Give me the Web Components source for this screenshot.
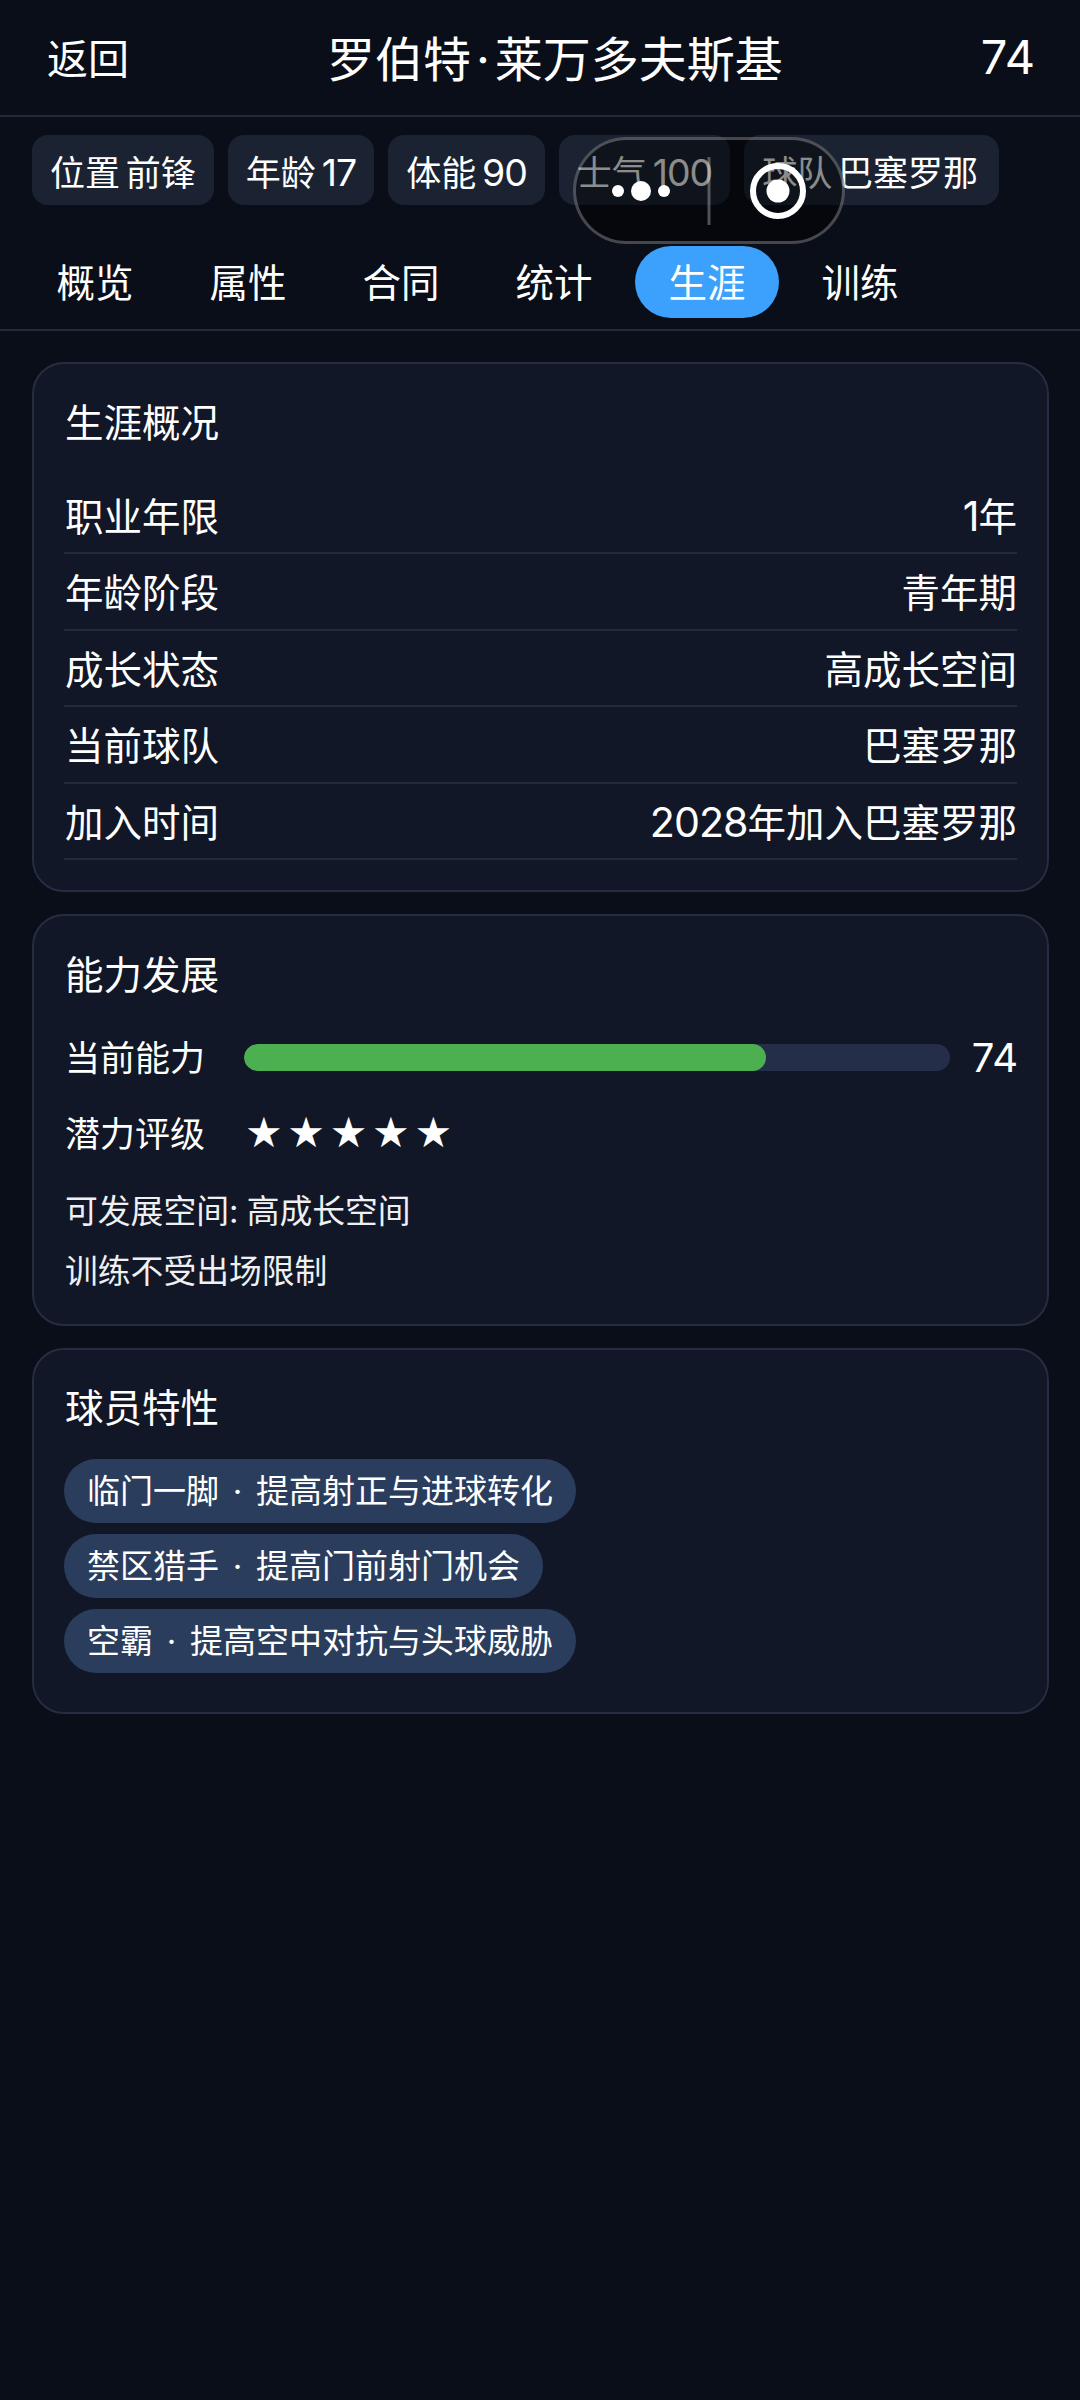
<!DOCTYPE html>
<html lang="zh">
<head>
<meta charset="utf-8">
<title>生涯</title>
<style>
  html, body { margin: 0; height: 2400px; background: #0a0e19; }
  body { position: relative; color: #fff; font-family: Inter, "Noto Sans CJK SC", sans-serif; overflow: hidden; }
  main-view { display: block; }
  .n { font-size: 1.07em; letter-spacing: -1px; }
</style>
</head>
<body>
<main-view>
  <top-bar score="74" back="返回">罗伯特<b>·</b>莱万多夫斯基</top-bar>
  <chip-row>
    <stat-chip>位置 前锋</stat-chip>
    <stat-chip>年龄 <span class="n">17</span></stat-chip>
    <stat-chip>体能 <span class="n">90</span></stat-chip>
    <stat-chip>士气 <span class="n">100</span></stat-chip>
    <stat-chip>球队 巴塞罗那</stat-chip>
  </chip-row>
  <tab-bar>
    <tab-item>概览</tab-item>
    <tab-item>属性</tab-item>
    <tab-item>合同</tab-item>
    <tab-item>统计</tab-item>
    <tab-item active>生涯</tab-item>
    <tab-item>训练</tab-item>
  </tab-bar>
  <card-list>
    <info-card heading="生涯概况" tail="30">
      <info-row label="职业年限"><span class="n">1</span>年</info-row>
      <info-row label="年龄阶段">青年期</info-row>
      <info-row label="成长状态">高成长空间</info-row>
      <info-row label="当前球队">巴塞罗那</info-row>
      <info-row label="加入时间"><span class="n">2028</span>年加入巴塞罗那</info-row>
    </info-card>
    <info-card heading="能力发展" tail="23">
      <ability-bar label="当前能力" value="74"></ability-bar>
      <star-rating label="潜力评级">★★★★★</star-rating>
      <note-line>可发展空间: 高成长空间</note-line>
      <note-line>训练不受出场限制</note-line>
    </info-card>
    <info-card heading="球员特性" tail="39">
      <trait-list>
        <trait-pill>临门一脚 <b>·</b> 提高射正与进球转化</trait-pill>
        <trait-pill>禁区猎手 <b>·</b> 提高门前射门机会</trait-pill>
        <trait-pill>空霸 <b>·</b> 提高空中对抗与头球威胁</trait-pill>
      </trait-list>
    </info-card>
  </card-list>
</main-view>
<capsule-menu></capsule-menu>

<script>
(function () {
  // small helper, every element is the same shape: a shadow root from a string
  function define(name, html, setup) {
    customElements.define(
      name,
      class extends HTMLElement {
        constructor() {
          super();
          const template = document.createElement("template");
          template.innerHTML = html;
          this.attachShadow({ mode: "open" }).appendChild(template.content.cloneNode(true));
        }
        connectedCallback() {
          if (setup) setup(this, this.shadowRoot);
        }
      }
    );
  }

  define("top-bar", `
    <style>
      :host { display: flex; justify-content: space-between; align-items: center; height: 112px; padding: 0 45px 3px 47px; border-bottom: 2px solid #232a3d; }
      .back { font-size: 41px; }
      .name { font-size: 48px; }
      .score { font-size: 47px; }
      ::slotted(b) { font-weight: 400; margin: 0 5px; }
    </style>
    <span class="back"></span><span class="name"><slot></slot></span><span class="score"></span>
  `, (el, root) => {
    root.querySelector(".back").textContent = el.getAttribute("back");
    root.querySelector(".score").textContent = el.getAttribute("score");
  });

  define("chip-row", `
    <style>:host { display: flex; gap: 14px; padding: 18px 32px 0; }</style>
    <slot></slot>
  `);

  define("stat-chip", `
    <style>
      :host { display: flex; align-items: center; height: 70px; padding: 0 18px; border-radius: 16px; background: #1b2333; font-size: 35px; white-space: nowrap; word-spacing: -4px; }
      :host(:last-child) { padding-right: 21px; }
    </style>
    <span><slot></slot></span>
  `);

  define("tab-bar", `
    <style>:host { display: flex; gap: 9px; align-items: flex-end; height: 127px; padding: 0 23px 11px; margin-top: -1px; box-sizing: border-box; border-bottom: 2px solid #232a3d; }</style>
    <slot></slot>
  `);

  define("tab-item", `
    <style>
      :host { display: flex; align-items: center; height: 72px; padding: 0 33.5px 4px; box-sizing: border-box; border-radius: 36px; font-size: 38.5px; }
      :host([active]) { background: #3ba1fd; }
    </style>
    <slot></slot>
  `);

  define("card-list", `
    <style>:host { display: flex; flex-direction: column; gap: 22px; padding: 31px 31px 0 32px; }</style>
    <slot></slot>
  `);

  define("info-card", `
    <style>
      :host { display: block; padding: 30.5px 30px 32px 31px; border: 2px solid #262d40; border-radius: 32px; background: #111726; }
      h2 { margin: 0 0 27px; font-size: 38.5px; font-weight: 400; line-height: 56px; }
    </style>
    <h2></h2><slot></slot>
  `, (el, root) => {
    root.querySelector("h2").textContent = el.getAttribute("heading");
    if (el.hasAttribute("tail")) el.style.paddingBottom = el.getAttribute("tail") + "px";
  });

  define("info-row", `
    <style>
      :host { display: flex; justify-content: space-between; align-items: center; height: 72.5px; margin-left: -1px; padding: 0 0 2px 1px; border-bottom: 2px solid #232a3d; font-size: 38.5px; }
    </style>
    <span></span><span><slot></slot></span>
  `, (el, root) => {
    root.querySelector("span").textContent = el.getAttribute("label");
  });

  define("ability-bar", `
    <style>
      :host { display: flex; align-items: center; gap: 22px; height: 60px; margin-top: -2px; font-size: 35px; }
      .label { padding-bottom: 4px; }
      .track { flex: 1; height: 27px; border-radius: 14px; background: #252e48; overflow: hidden; margin-left: 17px; }
      .fill { height: 100%; border-radius: 14px; background: #4caf50; }
      .value { font-size: 40px; margin-right: -1px; }
    </style>
    <span class="label"></span><div class="track"><div class="fill"></div></div><span class="value"></span>
  `, (el, root) => {
    const value = el.getAttribute("value");
    root.querySelector(".label").textContent = el.getAttribute("label");
    root.querySelector(".value").textContent = value;
    root.querySelector(".fill").style.width = value + "%";
  });

  define("star-rating", `
    <style>
      :host { display: flex; align-items: center; height: 90px; font-size: 35px; }
      .label { padding-bottom: 2px; }
      .stars { margin-left: 40px; font-family: "DejaVu Sans", sans-serif; font-size: 42px; letter-spacing: 4.7px; }
    </style>
    <span class="label"></span><span class="stars"><slot></slot></span>
  `, (el, root) => {
    root.querySelector(".label").textContent = el.getAttribute("label");
  });

  define("note-line", `
    <style>:host { display: block; height: 60px; line-height: 60px; font-size: 32.8px; word-spacing: -1px; color: #eef0f4; }
    :host(:first-of-type) { margin-top: 3px; }</style>
    <slot></slot>
  `);

  define("trait-list", `
    <style>:host { display: flex; flex-direction: column; align-items: flex-start; gap: 11px; margin: -4px 0 0 -1px; }</style>
    <slot></slot>
  `);

  define("trait-pill", `
    <style>
      :host { display: block; height: 64px; line-height: 64px; padding: 0 23px; border-radius: 32px; background: #2a3d5c; font-size: 33px; white-space: nowrap; }
      ::slotted(b) { font-weight: 400; margin: 0 4.5px; }
    </style>
    <slot></slot>
  `);

  // the mini program capsule that floats over the page
  define("capsule-menu", `
    <style>
      :host { position: absolute; left: 573px; top: 137px; width: 272px; height: 107px; box-sizing: border-box; border: 3px solid rgba(255,255,255,.26); border-radius: 54px; background: rgba(0,0,0,.45); }
      svg { display: block; position: absolute; left: -3px; top: -3px; }
    </style>
    <svg width="272" height="107" viewBox="0 0 272 107" fill="#fff">
      <circle cx="45" cy="54" r="6"/>
      <circle cx="68" cy="54" r="10"/>
      <circle cx="91" cy="54" r="6"/>
      <rect x="134.5" y="20" width="3" height="68" fill="rgba(255,255,255,.3)"/>
      <circle cx="205" cy="54" r="25" fill="none" stroke="#fff" stroke-width="6"/>
      <circle cx="205" cy="54" r="11.5"/>
    </svg>
  `);

  define("main-view", `
    <style>:host { display: block; }</style>
    <slot></slot>
  `);
})();
</script>
</body>
</html>
